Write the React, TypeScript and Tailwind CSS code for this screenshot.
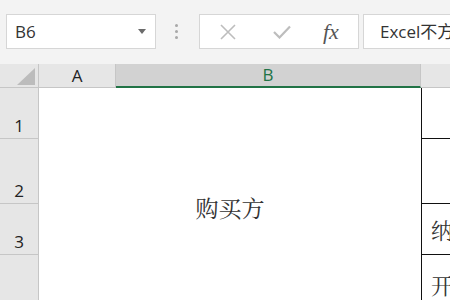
import React from 'react';

const sans = "font-['Segoe_UI','Open_Sans','Liberation_Sans','Noto_Sans_CJK_SC',sans-serif]";
const cjk = "font-['Noto_Serif_CJK_SC','Noto_Sans_CJK_SC',serif]";

// Row heights in px, matching the sheet
const rows = [
  { n: '1', h: 'h-[51px]' },
  { n: '2', h: 'h-[65px]' },
  { n: '3', h: 'h-[51px]' },
  { n: '', h: 'h-[60px]' },
];

const rightCells = [
  { text: '', h: 'h-[51px]' },
  { text: '', h: 'h-[65px]' },
  { text: '纳', h: 'h-[51px]' },
  { text: '开', h: 'h-[60px]' },
];

export default function App() {
  return (
    <div className={`h-[300px] w-[450px] overflow-hidden bg-[#f3f3f3] ${sans}`}>
      {/* Formula bar */}
      <div className="flex h-[64px] items-start pt-[14px]">
        <div className="ml-[6px] flex h-[35px] w-[150px] shrink-0 items-center justify-between border border-[#d6d6d6] bg-white pl-[8px] pr-[9px]">
          <span className="text-[17px] text-[#333]">B6</span>
          <svg width="8" height="5" viewBox="0 0 8 5">
            <path d="M0 0 L8 0 L4 5 Z" fill="#6b6b6b" />
          </svg>
        </div>
        <div className="ml-[19px] flex h-[35px] shrink-0 flex-col items-center justify-center gap-[3px]">
          <div className="h-[3px] w-[3px] rounded-full bg-[#a8a8a8]" />
          <div className="h-[3px] w-[3px] rounded-full bg-[#a8a8a8]" />
          <div className="h-[3px] w-[3px] rounded-full bg-[#a8a8a8]" />
        </div>
        <div className="ml-[21px] flex h-[35px] w-[160px] shrink-0 items-center border border-[#d6d6d6] bg-white">
          <svg className="ml-[20px]" width="16" height="16" viewBox="0 0 16 16">
            <path d="M1 1 L15 15 M15 1 L1 15" stroke="#bdbdbd" strokeWidth="1.6" fill="none" />
          </svg>
          <svg className="ml-[37px]" width="18" height="14" viewBox="0 0 18 14">
            <path d="M1 7 L6.5 12.5 L17 1.5" stroke="#bdbdbd" strokeWidth="2.2" fill="none" />
          </svg>
          <span className="ml-[32px] font-['Liberation_Serif',serif] text-[22px] italic leading-none text-[#555]">
            fx
          </span>
        </div>
        <div className="ml-[4px] flex h-[35px] min-w-0 flex-1 items-center overflow-hidden border border-r-0 border-[#d6d6d6] bg-white pl-[16px]">
          <span className="whitespace-nowrap text-[17px] text-[#333]">Excel不方便</span>
        </div>
      </div>

      {/* Column headers */}
      <div className="flex h-[24px] bg-[#e6e6e6]">
        <div className="relative w-[39px] shrink-0 border-r border-b border-[#c6c6c6]">
          <svg className="absolute left-[17px] top-[4px]" width="18" height="17" viewBox="0 0 18 17">
            <path d="M18 0 L18 17 L0 17 Z" fill="#bcbcbc" />
          </svg>
        </div>
        <div className="flex w-[77px] shrink-0 items-center justify-center border-r border-b border-[#c6c6c6] text-[17px] text-[#222]">
          A
        </div>
        <div className="flex w-[305px] shrink-0 items-center justify-center border-r border-[#c6c6c6] border-b-2 border-b-[#217346] bg-[#d2d2d2] text-[17px] text-[#217346]">
          B
        </div>
        <div className="flex-1 border-b border-[#c6c6c6]" />
      </div>

      {/* Sheet body */}
      <div className="flex">
        <div className="w-[39px] shrink-0 bg-[#e6e6e6]">
          {rows.map((r, i) => (
            <div
              key={i}
              className={`${r.h} flex items-end justify-center border-r border-b border-[#c6c6c6] pb-[3px] text-[17px] leading-[18px] text-[#222]`}
            >
              {r.n}
            </div>
          ))}
        </div>
        <div className="flex h-[240px] w-[382px] shrink-0 items-center justify-center bg-white">
          <span className={`${cjk} text-[23px] text-[#333]`}>购买方</span>
        </div>
        <div className="flex-1 border-l border-[#111] bg-white">
          {rightCells.map((c, i) => (
            <div
              key={i}
              className={`${c.h} flex items-center border-b border-[#111] pl-[9px] ${cjk} text-[22px] text-[#333]`}
            >
              {c.text}
            </div>
          ))}
        </div>
      </div>
    </div>
  );
}
